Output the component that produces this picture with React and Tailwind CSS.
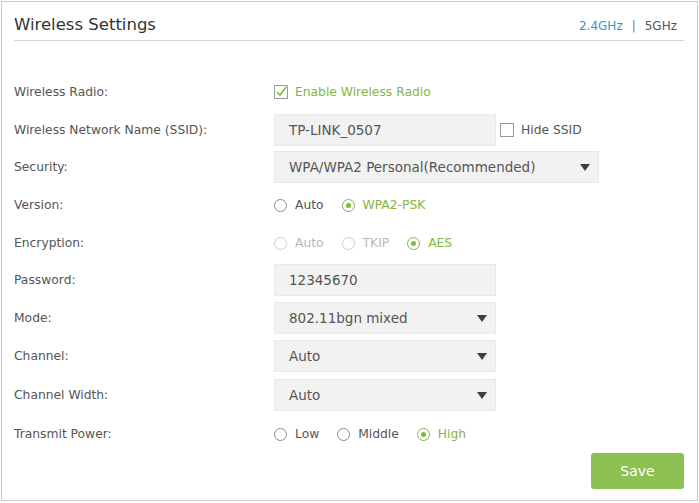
import React from "react";

const GREEN = "text-[#7fb83f]";

function Arrow() {
  return (
    <svg width="10" height="7" viewBox="0 0 10 7" className="shrink-0">
      <path d="M0 0 L10 0 L5 7 Z" fill="#3f3f3f" />
    </svg>
  );
}

function Radio({ checked, disabled, label, gap = "mr-[18px]" }) {
  const ring = disabled ? "border-[#cfcfcf]" : checked ? "border-[#7fb83f]" : "border-[#8a8a8a]";
  const txt = disabled ? "text-[#b8b8b8]" : checked ? GREEN : "text-[#555]";
  return (
    <div className={`flex items-center ${gap}`}>
      <span className={`w-[13px] h-[13px] rounded-full border ${ring} flex items-center justify-center bg-white`}>
        {checked && <span className="w-[5px] h-[5px] rounded-full bg-[#7fb83f]" />}
      </span>
      <span className={`ml-[8px] ${txt}`}>{label}</span>
    </div>
  );
}

function Checkbox({ checked }) {
  return (
    <span className="w-[14px] h-[14px] border border-[#9a9a9a] bg-white flex items-center justify-center shrink-0">
      {checked && (
        <svg width="12" height="12" viewBox="0 0 12 12">
          <path d="M2 6 L5 9 L11 1" fill="none" stroke="#7fb83f" strokeWidth="1.6" />
        </svg>
      )}
    </span>
  );
}

function Field({ value, wide, select }) {
  return (
    <div
      className={`h-[32px] ${wide ? "w-[325px]" : "w-[222px]"} bg-[#f2f2f2] border border-[#e8e8e8] flex items-center justify-between pl-[14px] pr-[8px] text-[#555] text-[13.5px]`}
    >
      <span>{value}</span>
      {select && <Arrow />}
    </div>
  );
}

function Row({ label, h, children }) {
  return (
    <div className={`flex items-center ${h}`}>
      <div className="w-[260px] shrink-0 text-[#555]">{label}</div>
      <div className="flex items-center">{children}</div>
    </div>
  );
}

export default function App() {
  return (
    <div
      className="w-[699px] h-[503px] bg-white p-[1px] text-[12.3px]"
      style={{ fontFamily: '"DejaVu Sans", Verdana, sans-serif' }}
    >
      <div className="w-[697px] h-[500px] border border-[#c9c9c9] pl-[12px] pr-[13px]">
        <div className="h-[39px] flex items-center justify-between border-b border-[#d6d6d6] pt-[9px]">
          <div className="text-[16.5px] text-[#333]">Wireless Settings</div>
          <div className="flex items-center pr-[7px] text-[12px]">
            <span className="text-[#3a95b8]">2.4GHz</span>
            <span className="mx-[9px] text-[#777]">|</span>
            <span className="text-[#555]">5GHz</span>
          </div>
        </div>

        <div className="mt-[32px]">
          <Row label="Wireless Radio:" h="h-[38px]">
            <Checkbox checked />
            <span className={`ml-[7px] ${GREEN}`}>Enable Wireless Radio</span>
          </Row>
          <Row label="Wireless Network Name (SSID):" h="h-[38px]">
            <Field value="TP-LINK_0507" />
            <span className="ml-[4px]"><Checkbox /></span>
            <span className="ml-[7px] text-[#555]">Hide SSID</span>
          </Row>
          <Row label="Security:" h="h-[36px]">
            <Field value="WPA/WPA2 Personal(Recommended)" wide select />
          </Row>
          <Row label="Version:" h="h-[40px]">
            <Radio label="Auto" />
            <Radio label="WPA2-PSK" checked />
          </Row>
          <Row label="Encryption:" h="h-[36px]">
            <Radio label="Auto" disabled />
            <Radio label="TKIP" disabled />
            <Radio label="AES" checked />
          </Row>
          <Row label="Password:" h="h-[38px]">
            <Field value="12345670" />
          </Row>
          <Row label="Mode:" h="h-[38px]">
            <Field value="802.11bgn mixed" select />
          </Row>
          <Row label="Channel:" h="h-[38px]">
            <Field value="Auto" select />
          </Row>
          <Row label="Channel Width:" h="h-[40px]">
            <Field value="Auto" select />
          </Row>
          <Row label="Transmit Power:" h="h-[38px]">
            <Radio label="Low" />
            <Radio label="Middle" />
            <Radio label="High" checked />
          </Row>
          <div className="flex justify-end">
            <button className="w-[93px] h-[36px] rounded-[3px] bg-[#8cc152] text-white text-[14px]">
              Save
            </button>
          </div>
        </div>
      </div>
    </div>
  );
}
